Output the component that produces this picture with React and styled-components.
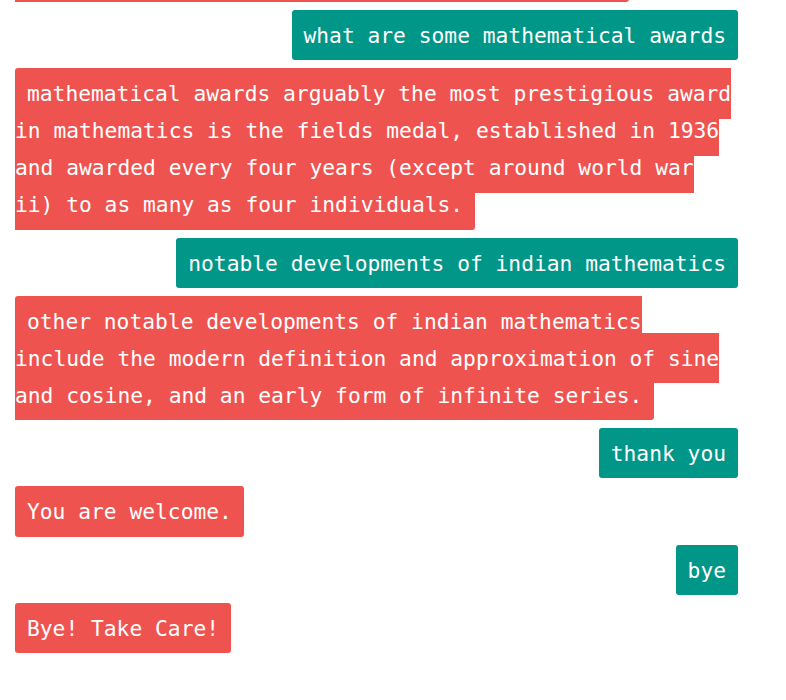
import React from "react";
import styled, { createGlobalStyle } from "styled-components";

const GlobalStyle = createGlobalStyle`
  html, body {
    margin: 0;
    padding: 0;
    background: #ffffff;
  }
  body {
    font-family: "DejaVu Sans Mono", "Liberation Mono", monospace;
  }
`;

const ChatWindow = styled.div`
  height: 100vh;
  box-sizing: border-box;
  overflow: hidden;
  display: flex;
  flex-direction: column;
  justify-content: flex-end;
  gap: 21.28px;
  padding: 0 48px 53.5px 15px;
`;

const Row = styled.div`
  flex-shrink: 0;
  text-align: ${(p) => (p.$from === "user" ? "right" : "left")};
  font-size: 21.28px;
  line-height: 37px;
`;

const Bubble = styled.span`
  background: ${(p) => (p.$from === "user" ? "#009688" : "#ef5350")};
  color: #ffffff;
  padding: 12.6px 12px;
  border-radius: 3px;
`;

const messages = [
  { from: "user", text: "indian mathematics" },
  {
    from: "bot",
    text: "indian mathematics emerged in the indian subcontinent from 1200 bc until the end of the 18th century.",
  },
  { from: "user", text: "what are some mathematical awards" },
  {
    from: "bot",
    text: "mathematical awards arguably the most prestigious award in mathematics is the fields medal, established in 1936 and awarded every four years (except around world war ii) to as many as four individuals.",
  },
  { from: "user", text: "notable developments of indian mathematics" },
  {
    from: "bot",
    text: "other notable developments of indian mathematics include the modern definition and approximation of sine and cosine, and an early form of infinite series.",
  },
  { from: "user", text: "thank you" },
  { from: "bot", text: "You are welcome." },
  { from: "user", text: "bye" },
  { from: "bot", text: "Bye! Take Care!" },
];

const App = () => {
  return (
    <>
      <GlobalStyle />
      <ChatWindow>
        {messages.map((m, i) => (
          <Row key={i} $from={m.from}>
            <Bubble $from={m.from}>{m.text}</Bubble>
          </Row>
        ))}
      </ChatWindow>
    </>
  );
};

export default App;
